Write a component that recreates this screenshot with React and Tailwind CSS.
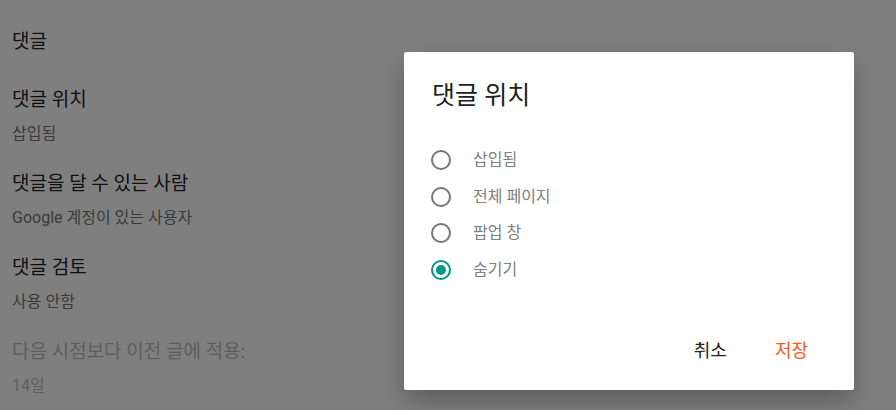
import React, { useState } from "react";

const options = ["삽입됨", "전체 페이지", "팝업 창", "숨기기"];

const settings = [
  { title: "댓글 위치", value: "삽입됨" },
  { title: "댓글을 달 수 있는 사람", value: "Google 계정이 있는 사용자" },
  { title: "댓글 검토", value: "사용 안함" },
  { title: "다음 시점보다 이전 글에 적용:", value: "14일", disabled: true },
];

const Radio = ({ checked }) => (
  <span
    className={
      "flex items-center justify-center w-5 h-5 rounded-full border-2 " +
      (checked ? "border-[#009688]" : "border-[#757575]")
    }
  >
    {checked && <span className="w-[10px] h-[10px] rounded-full bg-[#009688]" />}
  </span>
);

const App = () => {
  const [selected, setSelected] = useState("숨기기");

  return (
    <div
      className="relative w-full h-[410px] overflow-hidden bg-white"
      style={{ fontFamily: '"Roboto", "Noto Sans CJK KR", sans-serif' }}
    >
      {/* 설정 목록 */}
      <div className="pl-3 pt-[30px]">
        <h2 className="text-[19px] leading-6 text-[#212121]">댓글</h2>
        {settings.map((s, i) => (
          <div key={s.title} className={i === 0 ? "mt-[34px]" : "mt-[28px]"}>
            <div
              className={
                "text-[19px] leading-6 " +
                (s.disabled ? "text-[#bdbdbd]" : "text-[#212121]")
              }
            >
              {s.title}
            </div>
            <div
              className={
                "mt-[12px] text-[16px] leading-5 " +
                (s.disabled ? "text-[#bdbdbd]" : "text-[#757575]")
              }
            >
              {s.value}
            </div>
          </div>
        ))}
      </div>

      {/* 오버레이 + 대화상자 */}
      <div className="absolute inset-0 bg-black/50">
        <div className="absolute left-[404px] top-[52px] w-[450px] h-[338px] bg-white rounded-[2px] shadow-[0_12px_24px_rgba(0,0,0,0.25)] flex flex-col">
          <h3 className="pl-7 pt-[28px] text-[25px] leading-8 text-[#212121]">
            댓글 위치
          </h3>
          <div className="mt-[30px] pl-[27px]">
            {options.map((o) => (
              <label
                key={o}
                onClick={() => setSelected(o)}
                className="flex items-center h-[36.5px] cursor-pointer"
              >
                <Radio checked={selected === o} />
                <span className="ml-[22px] text-[16px] text-[#808080]">{o}</span>
              </label>
            ))}
          </div>
          <div className="mt-auto mb-[27px] flex justify-end items-center pr-[46px] gap-12">
            <button className="text-[18px] leading-6 text-[#212121]">취소</button>
            <button className="text-[18px] leading-6 text-[#ff5722]">저장</button>
          </div>
        </div>
      </div>
    </div>
  );
};

export default App;
